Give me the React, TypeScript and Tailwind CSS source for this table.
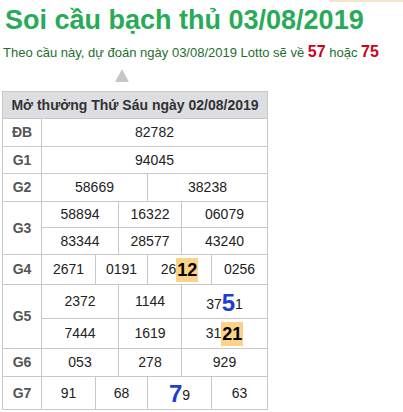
import type { ReactNode } from 'react'

const cell = 'bg-white flex items-center justify-center text-[14px] text-[#222]'
const label = 'bg-white flex items-center justify-center text-[14px] font-bold text-[#555]'

function Hl({ children }: { children: ReactNode }) {
  return <span className="bg-[#fcd386] font-bold text-[18px] text-black px-[1px] leading-[24px]">{children}</span>
}

function Blue({ children }: { children: ReactNode }) {
  return <span className="text-[#1b3fd0] text-[24px] font-bold leading-[24px]">{children}</span>
}

export default function App() {
  return (
    <div className="relative w-[403px] h-[412px] bg-white overflow-hidden" style={{ fontFamily: '"Liberation Sans", Arial, sans-serif' }}>
      <div className="absolute top-0 left-[330px] w-[73px] h-[2px] bg-[#f3e6cf]" />
      <h1 className="pl-[5px] pt-[3px] text-[27px] leading-[34px] font-bold text-[#27ab57]">Soi cầu bạch thủ 03/08/2019</h1>
      <p className="pl-[3px] mt-[6px] text-[13px] leading-[18px] text-[#1e6e2e]">
        Theo cầu này, dự đoán ngày 03/08/2019 Lotto sẽ về <b className="text-[16px] text-[#d0021b]">57</b> hoặc <b className="text-[16px] text-[#d0021b]">75</b>
      </p>
      <div className="ml-[115px] mt-[7px] w-0 h-0 border-l-[7px] border-r-[7px] border-b-[13px] border-l-transparent border-r-transparent border-b-[#c6c6c6]" />
      <div className="ml-[2px] mt-[9px] w-[266px] bg-[#c8c8c8] p-px grid gap-px grid-cols-[38px_53px_22px_28px_33px_29px_55px] grid-rows-[26px_27px_26px_27px_25px_26px_29px_33px_29px_27px_32px]">
        <div className="col-span-7 bg-[#dcdee2] flex items-center justify-center text-[14px] font-bold text-[#333]">Mở thưởng Thứ Sáu ngày 02/08/2019</div>

        <div className={label}>ĐB</div>
        <div className={`${cell} col-span-6`}>82782</div>

        <div className={label}>G1</div>
        <div className={`${cell} col-span-6`}>94045</div>

        <div className={label}>G2</div>
        <div className={`${cell} col-span-3`}>58669</div>
        <div className={`${cell} col-span-3`}>38238</div>

        <div className={`${label} row-span-2`}>G3</div>
        <div className={`${cell} col-span-2`}>58894</div>
        <div className={`${cell} col-span-2`}>16322</div>
        <div className={`${cell} col-span-2`}>06079</div>
        <div className={`${cell} col-span-2`}>83344</div>
        <div className={`${cell} col-span-2`}>28577</div>
        <div className={`${cell} col-span-2`}>43240</div>

        <div className={label}>G4</div>
        <div className={cell}>2671</div>
        <div className={`${cell} col-span-2`}>0191</div>
        <div className={`${cell} col-span-2`}>26<Hl>12</Hl></div>
        <div className={cell}>0256</div>

        <div className={`${label} row-span-2`}>G5</div>
        <div className={`${cell} col-span-2`}>2372</div>
        <div className={`${cell} col-span-2`}>1144</div>
        <div className={`${cell} col-span-2 items-end pb-[3px]`}>37<Blue>5</Blue>1</div>
        <div className={`${cell} col-span-2`}>7444</div>
        <div className={`${cell} col-span-2`}>1619</div>
        <div className={`${cell} col-span-2`}>31<Hl>21</Hl></div>

        <div className={label}>G6</div>
        <div className={`${cell} col-span-2`}>053</div>
        <div className={`${cell} col-span-2`}>278</div>
        <div className={`${cell} col-span-2`}>929</div>

        <div className={label}>G7</div>
        <div className={cell}>91</div>
        <div className={`${cell} col-span-2`}>68</div>
        <div className={`${cell} col-span-2 items-end pb-[3px]`}><Blue>7</Blue>9</div>
        <div className={cell}>63</div>
      </div>
    </div>
  )
}
